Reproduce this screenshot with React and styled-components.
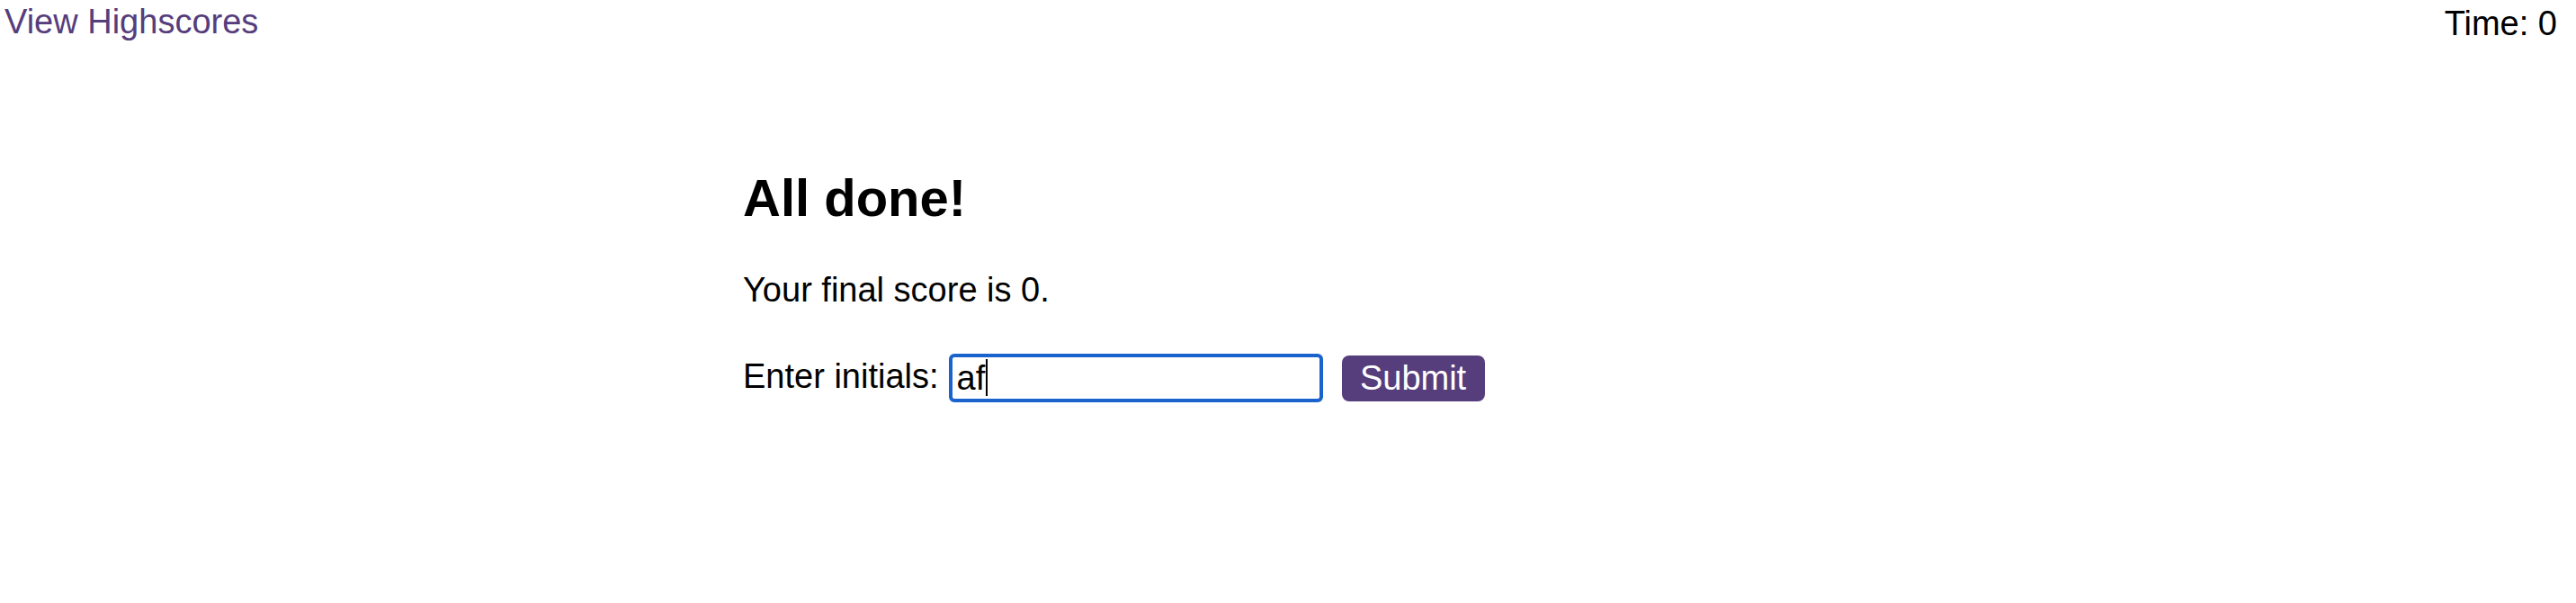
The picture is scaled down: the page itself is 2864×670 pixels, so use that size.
import styled, { createGlobalStyle } from "styled-components";

const GlobalStyle = createGlobalStyle`
  body {
    margin: 0;
    background: #ffffff;
    font-family: "Liberation Sans", Arial, sans-serif;
    color: #000000;
  }
`;

function App() {
  return (
    <>
      <GlobalStyle />
      <Header>
        <HighscoreLink href="#">View Highscores</HighscoreLink>
        <Timer>Time: 0</Timer>
      </Header>
      <Main>
        <Title>All done!</Title>
        <Score>Your final score is 0.</Score>
        <InitialsForm onSubmit={(e) => e.preventDefault()}>
          <Label htmlFor="initials">Enter initials:</Label>
          <InputWrap>
            <InitialsInput id="initials" defaultValue="af" />
            {/* fake caret, the focused field shows one in the screenshot */}
            <Caret />
          </InputWrap>
          <SubmitButton type="submit">Submit</SubmitButton>
        </InitialsForm>
      </Main>
    </>
  );
}

export default App;

const Header = styled.header`
  display: flex;
  justify-content: space-between;
  align-items: flex-start;
  padding: 2px 21px 0 5px;
  font-size: 38px;
  line-height: 44px;
`;

const HighscoreLink = styled.a`
  color: #563d7c;
  text-decoration: none;
`;

const Timer = styled.span`
  margin-top: 2px;
`;

const Main = styled.main`
  width: 1212px;
  margin: 0 auto;
  padding-top: 139px;
`;

const Title = styled.h1`
  margin: 0 0 47px;
  font-size: 58px;
  line-height: 66px;
  font-weight: bold;
`;

const Score = styled.p`
  margin: 0 0 49px;
  font-size: 38px;
  line-height: 44px;
`;

const InitialsForm = styled.form`
  display: flex;
  align-items: center;
  font-size: 38px;
  line-height: 44px;
`;

const Label = styled.label`
  margin-right: 11px;
  position: relative;
  top: -2px;
`;

const InputWrap = styled.div`
  position: relative;
  display: flex;
`;

const InitialsInput = styled.input`
  box-sizing: border-box;
  width: 416px;
  height: 54px;
  padding: 0 5px;
  border: 4px solid #1a63cc;
  border-radius: 6px;
  outline: none;
  font-family: "Liberation Sans", Arial, sans-serif;
  font-size: 38px;
  color: #000000;
`;

const Caret = styled.span`
  position: absolute;
  left: 41px;
  top: 6px;
  width: 2px;
  height: 41px;
  background: #000000;
`;

const SubmitButton = styled.button`
  box-sizing: border-box;
  width: 159px;
  height: 51px;
  margin-left: 21px;
  padding: 0;
  border: none;
  border-radius: 8px;
  background: #563d7c;
  color: #ffffff;
  font-family: "Liberation Sans", Arial, sans-serif;
  font-size: 38px;
  line-height: 51px;
  cursor: pointer;
`;
